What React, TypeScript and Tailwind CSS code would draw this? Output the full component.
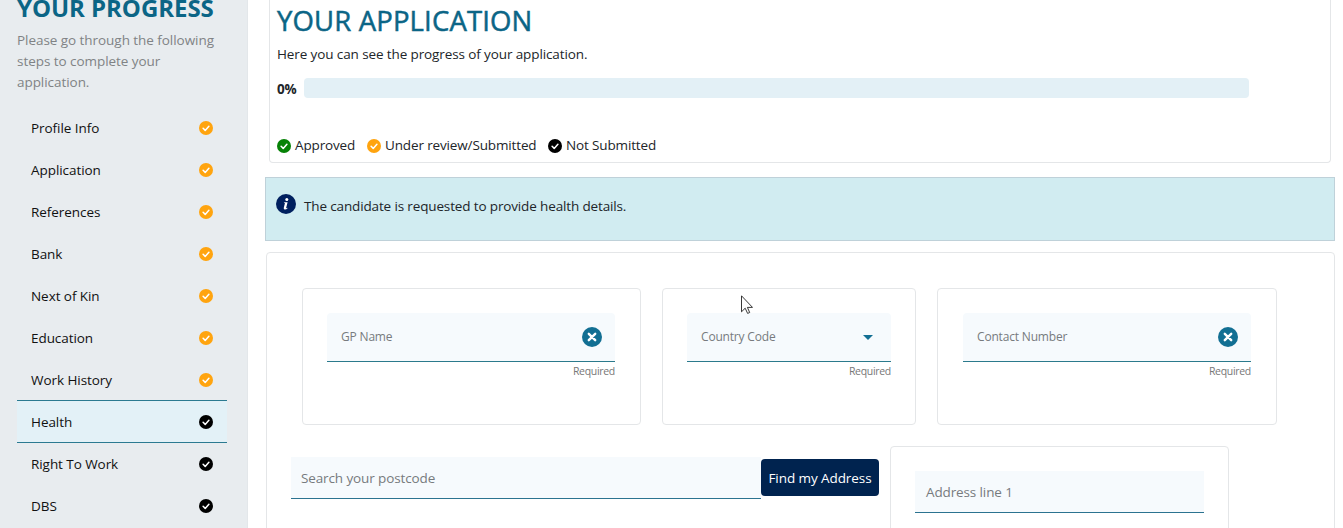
import type { ReactNode } from "react";

const steps = [
  { name: "Profile Info", done: true },
  { name: "Application", done: true },
  { name: "References", done: true },
  { name: "Bank", done: true },
  { name: "Next of Kin", done: true },
  { name: "Education", done: true },
  { name: "Work History", done: true },
  { name: "Health", done: false, active: true },
  { name: "Right To Work", done: false },
  { name: "DBS", done: false },
];

function Check({ color }: { color: string }) {
  return (
    <svg className={`size-[14px] shrink-0 ${color}`} viewBox="0 0 14 14">
      <circle cx="7" cy="7" r="7" fill="currentColor" />
      <path d="M4.1 7.3l2.1 2.1 3.7-4.2" fill="none" stroke="#fff" strokeWidth="1.5" strokeLinecap="round" strokeLinejoin="round" />
    </svg>
  );
}

function Clear() {
  return (
    <svg className="size-[20px] shrink-0" viewBox="0 0 20 20">
      <circle cx="10" cy="10" r="10" fill="#126f93" />
      <path d="M6.8 6.8l6.4 6.4M13.2 6.8l-6.4 6.4" stroke="#fff" strokeWidth="2.4" strokeLinecap="round" />
    </svg>
  );
}

function Sidebar() {
  return (
    <aside className="h-full w-[248px] shrink-0 overflow-hidden border-r border-[#e3e7ea] bg-[#e8ecef] pl-[17px]">
      <h2 className="h-[25px] text-[24px] leading-[16px] font-bold tracking-[-0.05px] whitespace-nowrap text-[#0b6586]">
        YOUR PROGRESS
      </h2>
      <p className="mt-[5px] h-[63px] text-[13.5px] leading-[21px] tracking-[-0.05px] whitespace-nowrap text-[#808385]">
        Please go through the following
        <br />
        steps to complete your
        <br />
        application.
      </p>
      <ul className="mt-[14px] w-[210px]">
        {steps.map((s) => (
          <li
            key={s.name}
            className={
              s.active
                ? "-mt-px flex h-[43px] items-center justify-between border-y border-[#2b7a91] bg-[#e3f1f7] px-[14px]"
                : "-mt-px flex h-[43px] items-center justify-between border-y border-transparent px-[14px]"
            }
          >
            <span className="pt-[2px] text-[13.5px] leading-[21px] tracking-[-0.06px] text-[#111]">{s.name}</span>
            <Check color={s.done ? "text-[#ffa40f]" : "text-black"} />
          </li>
        ))}
      </ul>
    </aside>
  );
}

function Field({ label, width, children }: { label: string; width: string; children: ReactNode }) {
  return (
    <div className={width}>
      <div className="flex h-[49px] items-center justify-between rounded-t border-b border-[#2b7a8c] bg-[#f6fafd] pr-[13px] pl-[14px]">
        <span className="text-[12px] leading-[18px] tracking-[-0.18px] text-[#777b7e]">{label}</span>
        {children}
      </div>
      <div className="text-right text-[10.5px] leading-[18px] tracking-[-0.3px] text-[#777]">Required</div>
    </div>
  );
}

export default function App() {
  return (
    <div className="relative flex h-[528px] w-[1343px] overflow-hidden bg-white font-['Open_Sans','Noto_Sans',sans-serif] text-[13.5px] text-[#212529]">
      <Sidebar />
      <main className="flex h-full flex-1 flex-col pl-[17px]">
        <section className="ml-[4px] h-[163px] w-[1062px] shrink-0 rounded-b border border-t-0 border-[#e4e6e8] pl-[7px]">
          <h1 className="pt-[1px] text-[27.5px] leading-[40px] font-medium tracking-[0.15px] whitespace-nowrap text-[#0b6586] [-webkit-text-stroke:0.5px_#0b6586]">
            YOUR APPLICATION
          </h1>
          <p className="mt-[3px] leading-[21px] tracking-[-0.11px]">Here you can see the progress of your application.</p>
          <div className="mt-[13px] flex h-[20px] items-center">
            <span className="w-[27px] pt-[3px] text-[13.5px] font-bold tracking-[-0.3px]">0%</span>
            <div className="h-[20px] w-[945px] rounded bg-[#e3f0f6]" />
          </div>
          <div className="mt-[37px] flex h-[21px] items-center tracking-[-0.14px]">
            <Check color="text-[#068206]" />
            <span className="ml-[4px] w-[72px]">Approved</span>
            <Check color="text-[#ffa40f]" />
            <span className="ml-[4px] w-[163px] whitespace-nowrap">Under review/Submitted</span>
            <Check color="text-black" />
            <span className="ml-[4px] whitespace-nowrap">Not Submitted</span>
          </div>
        </section>
        <section className="mt-[14px] flex h-[64px] w-[1070px] shrink-0 border border-[#bfd1d9] bg-[#d1ecf1] pl-[10px]">
          <svg className="mt-[16px] size-[20px]" viewBox="0 0 20 20">
            <circle cx="10" cy="10" r="10" fill="#00205f" />
            <circle cx="10.8" cy="5.5" r="1.5" fill="#fff" />
            <path d="M8 8.2h3.6l-1.5 5.7c-.1.5.4.5 1.1-.1l.4.5c-1.8 2-4.3 1.6-3.8-.5l1-4.1c.2-.7-.1-.9-.9-.9z" fill="#fff" />
          </svg>
          <span className="mt-[18px] ml-[8px] leading-[21px] tracking-[-0.14px]">The candidate is requested to provide health details.</span>
        </section>
        <section className="mt-[11px] ml-[1px] h-[320px] w-[1069px] shrink-0 rounded border border-[#e4e6e8]">
          <div className="mt-[35px] ml-[35px] flex gap-[21px]">
            <div className="h-[137px] w-[339px] rounded border border-[#e4e6e8] pt-[24px] pl-[24px]">
              <Field label="GP Name" width="w-[288px]">
                <Clear />
              </Field>
            </div>
            <div className="h-[137px] w-[254px] rounded border border-[#e4e6e8] pt-[24px] pl-[24px]">
              <Field label="Country Code" width="w-[204px]">
                <svg className="mr-[5px] h-[5px] w-[10px]" viewBox="0 0 10 5">
                  <path d="M0 0h10L5 5z" fill="#126f93" />
                </svg>
              </Field>
            </div>
            <div className="h-[137px] w-[340px] rounded border border-[#e4e6e8] pt-[24px] pl-[25px]">
              <Field label="Contact Number" width="w-[288px]">
                <Clear />
              </Field>
            </div>
          </div>
          <div className="mt-[21px] ml-[24px] flex items-start">
            <div className="mt-[11px] flex h-[42px] w-[470px] items-center border-b border-[#2b7390] bg-[#f6fafd] pt-[2px] pl-[10px] tracking-[-0.12px] text-[#777b7e]">
              Search your postcode
            </div>
            <button className="mt-[13px] h-[37px] w-[118px] rounded bg-[#00234f] pt-[2px] text-center tracking-[-0.08px] whitespace-nowrap text-white">
              Find my Address
            </button>
            <div className="ml-[11px] h-[137px] w-[339px] rounded border border-[#e4e6e8] pt-[24px] pl-[24px]">
              <div className="flex h-[42px] w-[289px] items-center border-b border-[#2b7390] bg-[#f6fafd] pt-[2px] pl-[11px] tracking-[-0.12px] text-[#777b7e]">
                Address line 1
              </div>
            </div>
          </div>
        </section>
      </main>
      <svg className="absolute top-[295px] left-[741px] h-[19px] w-[12px]" viewBox="0 0 12 19">
        <path d="M.5.8v16l3.7-3.6 2.4 5.2 2.1-.9-2.3-5.1h5.1z" fill="#fff" stroke="#222" strokeWidth=".9" />
      </svg>
    </div>
  );
}
